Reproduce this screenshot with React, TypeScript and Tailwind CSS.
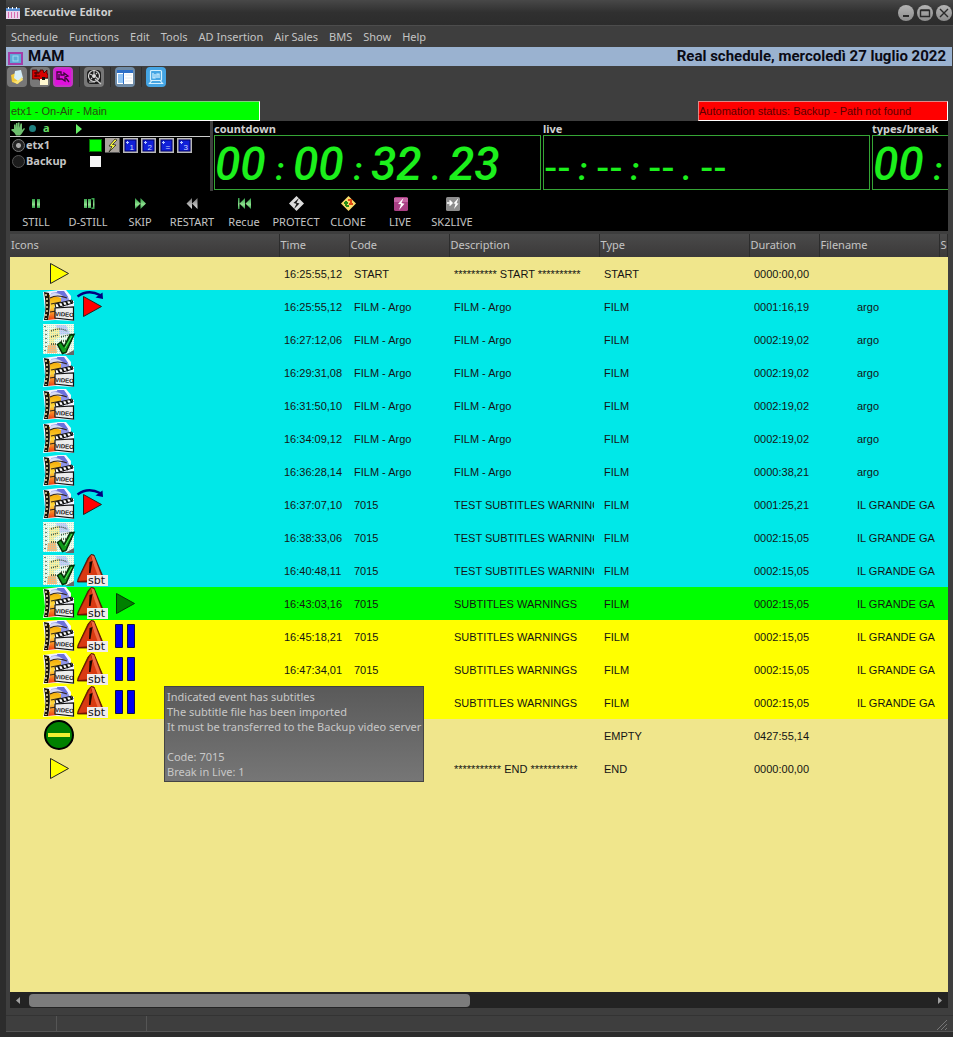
import React from "react";

type Icon = "start" | "film" | "done" | "skip" | "warn" | "play" | "pause" | "empty";

interface Row {
  tone: string;
  icons: Icon[];
  time: string;
  code: string;
  description: string;
  type: string;
  duration: string;
  file: string;
}

const KHAKI = "bg-[#f0e68c]";
const CYAN = "bg-[#00e8e8]";
const GREEN = "bg-[#00ff00]";
const YELLOW = "bg-[#ffff00]";

const row = (
  tone: string,
  icons: Icon[],
  time: string,
  code: string,
  description: string,
  type: string,
  duration: string,
  file: string,
): Row => ({ tone, icons, time, code, description, type, duration, file });

const rows: Row[] = [
  row(KHAKI, ["start"], "16:25:55,12", "START", "********** START **********", "START", "0000:00,00", ""),
  row(CYAN, ["film", "skip"], "16:25:55,12", "FILM - Argo", "FILM - Argo", "FILM", "0001:16,19", "argo"),
  row(CYAN, ["done"], "16:27:12,06", "FILM - Argo", "FILM - Argo", "FILM", "0002:19,02", "argo"),
  row(CYAN, ["film"], "16:29:31,08", "FILM - Argo", "FILM - Argo", "FILM", "0002:19,02", "argo"),
  row(CYAN, ["film"], "16:31:50,10", "FILM - Argo", "FILM - Argo", "FILM", "0002:19,02", "argo"),
  row(CYAN, ["film"], "16:34:09,12", "FILM - Argo", "FILM - Argo", "FILM", "0002:19,02", "argo"),
  row(CYAN, ["film"], "16:36:28,14", "FILM - Argo", "FILM - Argo", "FILM", "0000:38,21", "argo"),
  row(CYAN, ["film", "skip"], "16:37:07,10", "7015", "TEST SUBTITLES WARNINGS", "FILM", "0001:25,21", "IL GRANDE GA"),
  row(CYAN, ["done"], "16:38:33,06", "7015", "TEST SUBTITLES WARNINGS", "FILM", "0002:15,05", "IL GRANDE GA"),
  row(CYAN, ["done", "warn"], "16:40:48,11", "7015", "TEST SUBTITLES WARNINGS", "FILM", "0002:15,05", "IL GRANDE GA"),
  row(GREEN, ["film", "warn", "play"], "16:43:03,16", "7015", "SUBTITLES WARNINGS", "FILM", "0002:15,05", "IL GRANDE GA"),
  row(YELLOW, ["film", "warn", "pause"], "16:45:18,21", "7015", "SUBTITLES WARNINGS", "FILM", "0002:15,05", "IL GRANDE GA"),
  row(YELLOW, ["film", "warn", "pause"], "16:47:34,01", "7015", "SUBTITLES WARNINGS", "FILM", "0002:15,05", "IL GRANDE GA"),
  row(YELLOW, ["film", "warn", "pause"], "", "", "SUBTITLES WARNINGS", "FILM", "0002:15,05", "IL GRANDE GA"),
  row(KHAKI, ["empty"], "", "", "", "EMPTY", "0427:55,14", ""),
  row(KHAKI, ["start"], "", "", "*********** END ***********", "END", "0000:00,00", ""),
];

function Film() {
  return (
    <g>
      <path d="M0 2 L16 0 L23 0 L28 6 L28 10 L31 11 L31 31 L12 30 L0 31 L2 20 Z" fill="#f4f4ff" />
      <path d="M8 3 L14 2 L20 1 Q25 5 27 12 L12 14 Q9 8 8 3Z" fill="#8f95ea" />
      <path d="M14 1 L21 1 L25 7 L16 8Z" fill="#6b70dc" />
      <path d="M6 5 Q13 4 18 7 L18 14 L11 17 L14 29 L5 30 Q9 18 6 5Z" fill="url(#filmBody)" />
      <path d="M7 4 Q14 1 20 6 L18 8 Q12 5 7 8Z" fill="#d8dcf6" />
      <path d="M1 2 L6 3 Q8 16 5 30 L1 30 Q4 16 1 2Z" fill="#1a1408" />
      <path d="M3 4v2M4 8v2M4 12v2M4 16v2M4 20v2M3 24v2M3 28v1" stroke="#e8d9a0" strokeWidth="1.6" />
      <path d="M7 8 Q14 4 24 8M8 14 L18 12M7 22 L13 21" stroke="#33261a" strokeWidth="1.200" fill="none" />
      <path d="M12 14 L29 10 L30 13 L13 18Z" fill="#fff" stroke="#111" strokeWidth="1" />
      <path d="M15 13.500l2 3.500M19 12.500l2 3.500M23 11.500l2 3.500M27 10.500l2 3" stroke="#111" strokeWidth="1.800" />
      <path d="M12 18 L30.500 17 L30.500 30 L12 28Z" fill="#ededed" stroke="#111" strokeWidth="1.200" />
      <text x="12" y="26" fontSize="6" fontWeight="700" fontFamily="Liberation Sans, sans-serif" fill="#111" transform="rotate(3 13 26)">
        VIDEO
      </text>
    </g>
  );
}

function RowIcon({ kind }: { kind: Icon }) {
  return (
    <svg className="block size-[33px] shrink-0" viewBox="0 0 33 33" aria-hidden="true">
      {kind === "start" && <path d="M7.500 6.500 L25.500 16.500 L7.500 26.500Z" fill="#ffff00" stroke="#222" />}
      {kind === "film" && <Film />}
      {kind === "done" && (
        <g>
          <rect x="0" y="1" width="31" height="30" fill="#f3fbe9" />
          <path d="M13 2h10l4 9-12 1z" fill="#c9cdf6" />
          <path d="M6 7l10-2 1 9-6 3 1 5H6z" fill="#fbf0a0" />
          <path d="M5 22l8-1 1 9H4z" fill="#f7b878" />
          <rect x="0" y="1" width="31" height="30" fill="url(#hatch)" />
          <path d="M2 3v2M3 7v2M3 11v2M3 15v2M3 19v2M3 23v2M2 27v2M8 8q8-4 16 0M8 14l7-2M8 21h5M18 14l11-3M18 18h11" stroke="#33402a" strokeDasharray="1 1" strokeWidth="1.300" fill="none" />
          <path d="M22 32h9v-5z" fill="#666" />
          <path d="M14.500 21.500 L18 19 L21 23.500 L27 12 L31 11.500 L23 29.500 L19.500 30.500Z" fill="#119a1b" stroke="#042e06" strokeWidth="1.500" />
          <path d="M22 25 L29 13" stroke="#5be060" />
        </g>
      )}
      {kind === "skip" && (
        <g>
          <path d="M7.500 6.500 L25.500 16.500 L7.500 26.500Z" fill="#ff0000" stroke="#222" />
          <path d="M1.500 6.500 Q12 -1 24 5" fill="none" stroke="#000080" strokeWidth="2.500" />
          <path d="M26.500 2.500 L27 9 L19.500 7.500Z" fill="#000080" />
        </g>
      )}
      {kind === "warn" && (
        <g>
          <path d="M15 0.500 L18 1 L28 25 L14 28 L1.500 28 L2 25 L12 4Z" fill="#8e1b06" stroke="#3c0a00" strokeWidth="0.800" />
          <path d="M15 1 L18 2 L26 24 L21 25Z" fill="#f06a42" />
          <path d="M14.500 2 L23 25 L2.500 27 L3 25Z" fill="#d93a12" />
          <path d="M13.500 8 L16.500 7 L14.500 19 L13 19Z" fill="#1a0500" />
          <path d="M13 21h2v3h-2z" fill="#1a0500" />
          <rect x="11" y="21" width="21" height="11" fill="#f1ecec" />
          <text x="12" y="30" fontSize="11" fontFamily="DejaVu Sans, sans-serif" fill="#111">
            sbt
          </text>
        </g>
      )}
      {kind === "play" && <path d="M7.500 6.500 L25.500 16.500 L7.500 26.500Z" fill="#008000" stroke="#063806" />}
      {kind === "pause" && (
        <path d="M6.500 4.500h7v23h-7zM18.500 4.500h7v23h-7z" fill="#0000f0" stroke="#111148" />
      )}
      {kind === "empty" && (
        <g>
          <circle cx="16" cy="16" r="14" fill="#008000" stroke="#000" strokeWidth="2" />
          <rect x="5" y="14" width="22" height="4" fill="#f0f032" />
        </g>
      )}
    </svg>
  );
}

const toolIcons: { label: string; art: React.ReactNode; face: string; divider?: boolean }[] = [
  {
    label: "Open schedule",
    face: "bg-[#777]",
    art: (
      <g>
        <path d="M2 6 L7 4 L13 9 L9 15 L3 13Z" fill="#f3c93a" />
        <path d="M6 2 L12 1 L14 9 L9 12 L5 9Z" fill="#d5eef8" />
        <path d="M3 12 Q8 14 13 8 L14 11 L8 15Z" fill="#fbe477" />
      </g>
    ),
  },
  {
    label: "Send to air",
    face: "bg-[#777]",
    art: (
      <g>
        <path d="M0 1h5v2h3V1h3l1 3 3-3v4h1v4h-4v2h-5v-1H0Z" fill="#d60000" stroke="#380000" strokeWidth="0.800" />
        <path d="M2 4h5M2 7h6M4 3v5" stroke="#3a0000" />
        <rect x="8" y="10" width="8" height="6" fill="#fff8d0" />
        <rect x="10" y="8" width="3" height="3" fill="#111" />
      </g>
    ),
  },
  {
    label: "Edit break",
    face: "bg-[#c238c2]",
    art: (
      <g>
        <rect x="0" y="0" width="16" height="16" fill="#e010dc" />
        <path d="M2 3h4v3h3v-2l4 3-3 1v4l-3-2H2zM11 9l3 4M4 5v6" stroke="#3b0838" strokeWidth="1.300" fill="none" />
      </g>
    ),
  },
  {
    label: "Search clip",
    face: "bg-[#777]",
    divider: true,
    art: (
      <g>
        <rect x="1" y="1" width="14" height="14" rx="4" fill="#1c1c1c" />
        <circle cx="8" cy="7" r="5.500" fill="none" stroke="#ddd" strokeWidth="1.200" />
        <circle cx="8" cy="7" r="2" fill="#ddd" />
        <path d="M8 2v3M4 5l2 1M10 8l2 2M9 10l6 5M3 13h6M5 10l1-1M11 4l-1 1" stroke="#ccc" strokeWidth="1.200" />
      </g>
    ),
  },
  {
    label: "Layout",
    face: "bg-[#6f8ba6]",
    divider: true,
    art: (
      <g>
        <rect x="0" y="1" width="16" height="14" fill="#fff" />
        <rect x="0" y="1" width="16" height="3" fill="#2d6fc7" />
        <rect x="1" y="5" width="5" height="9" fill="#8fc4f4" />
        <path d="M8 6h7M8 9h7M8 12h7" stroke="#dfe9f1" />
        <path d="M6.500 4v11" stroke="#2d6fc7" />
      </g>
    ),
  },
  {
    label: "Monitor",
    face: "bg-[#45a5e4]",
    divider: true,
    art: (
      <g fill="none" stroke="#d3f0ff" strokeWidth="1.200">
        <rect x="2.500" y="1.500" width="11" height="10" rx="1" />
        <path d="M3.500 12L1.500 14.500h13L12.500 12M5 4v5h2V5M9 9V5h2v4" />
      </g>
    ),
  },
];

const transport: { label: string; art: React.ReactNode }[] = [
  { label: "STILL", art: <path d="M4 4h3v9H4zM9 4h3v9H9z" fill="url(#greenFade)" /> },
  { label: "D-STILL", art: <path d="M4 4h3v9H4zM8 4h3v9H8zM11.500 3h3v11h-3v-1.500h1.500v-8h-1.500z" fill="url(#greenFade)" /> },
  { label: "SKIP", art: <path d="M3 3l5.500 5.500L3 14zM8.500 3l5.500 5.500L8.500 14z" fill="url(#greenFade)" /> },
  { label: "RESTART", art: <path d="M8 3L2.500 8.500 8 14zM13.500 3L8 8.500l5.500 5.500z" fill="url(#greyFade)" /> },
  { label: "Recue", art: <path d="M2 3h1.500v11H2zM9 3L3.500 8.500 9 14zM15 3L9.500 8.500 15 14z" fill="url(#greenFade)" /> },
  {
    label: "PROTECT",
    art: (
      <g>
        <path d="M8.500 1L16 8.500 8.500 16 1 8.500z" fill="#dcdcdc" />
        <path d="M11 3L5.500 8l3 .8L6 14l5.500-5.500-3-.8z" fill="#151515" />
      </g>
    ),
  },
  {
    label: "CLONE",
    art: (
      <g>
        <path d="M8.500 1L16 8.500 8.500 16 1 8.500z" fill="#f6dc6a" />
        <path d="M4 8h4M6 6v5M6 11h3" stroke="#278b16" strokeWidth="2" fill="none" />
        <path d="M8 5h4M11 5v5M9 9h4" stroke="#e04a14" strokeWidth="2" fill="none" />
      </g>
    ),
  },
  {
    label: "LIVE",
    art: (
      <g>
        <rect x="2" y="2" width="14" height="14" rx="1.500" fill="#a93f84" />
        <path d="M2 3h14v4H2z" fill="#c765a4" />
        <path d="M11.500 3L6 9l3 .3L7 15l5.500-6.300L9.500 8z" fill="#fff" />
      </g>
    ),
  },
  {
    label: "SK2LIVE",
    art: (
      <g>
        <rect x="2" y="2" width="14" height="14" rx="1.500" fill="#8d8d8d" />
        <path d="M3 8h5M5.500 5.500L8 8l-2.500 2.500" stroke="#fff" strokeWidth="1.500" fill="none" />
        <path d="M14.500 3L9.500 8.500l2 .3L10 14l4.500-5.500-2-.3z" fill="#fff" />
      </g>
    ),
  },
];

function Clock({ label, parts, size }: { label: string; parts: string[]; size: string }) {
  return (
    <div className={`flex min-w-0 flex-col overflow-hidden ${size}`}>
      <h2 className="h-[14px] text-[11px] leading-[15px] font-bold text-[#d0d0d0]">{label}</h2>
      <div className="flex h-[55px] items-baseline overflow-hidden border border-[#35a535] leading-[53px] whitespace-nowrap text-[#1cf01c]">
        <span className="w-0 overflow-hidden text-[46px]" aria-hidden="true">
          &nbsp;
        </span>
        {parts.map((part, i) =>
          part === "--" ? (
            <span key={i} className="w-[26px] shrink-0 font-['Liberation_Sans',sans-serif] text-[40px]">
              --
            </span>
          ) : part.length === 2 ? (
            <span key={i} className="w-[52px] shrink-0 font-[Roboto,sans-serif] text-[46px] font-medium italic">
              {part}
            </span>
          ) : (
            <span key={i} className="w-[26px] shrink-0 text-center font-[Roboto,sans-serif] text-[32px] font-bold italic">
              {part}
            </span>
          ),
        )}
      </div>
    </div>
  );
}

const columns = [
  { label: "Icons", width: "w-[269px]" },
  { label: "Time", width: "w-[70px]" },
  { label: "Code", width: "w-[100px]" },
  { label: "Description", width: "w-[150px]" },
  { label: "Type", width: "w-[150px]" },
  { label: "Duration", width: "w-[70px]" },
  { label: "Filename", width: "w-[120px]" },
  { label: "Sc", width: "" },
];

const menus = ["Schedule", "Functions", "Edit", "Tools", "AD Insertion", "Air Sales", "BMS", "Show", "Help"];

export default function App() {
  return (
    <div className="flex min-h-screen flex-col border-l-[6px] border-[#2c2c2c] bg-[#3e3e3e] font-['Noto_Sans','Liberation_Sans',sans-serif] text-[11px] text-[#c4c4c4]">
      <svg className="absolute size-0" aria-hidden="true">
        <defs>
          <linearGradient id="filmBody" x1="0" y1="0" x2="0" y2="1">
            <stop offset="0" stopColor="#f2a400" />
            <stop offset="0.5" stopColor="#ffd83a" />
            <stop offset="1" stopColor="#f03a10" />
          </linearGradient>
          <linearGradient id="greenFade" x1="0" y1="0" x2="0" y2="1">
            <stop offset="0" stopColor="#2f9e45" />
            <stop offset="0.6" stopColor="#8fe08f" />
            <stop offset="1" stopColor="#2f9e45" />
          </linearGradient>
          <linearGradient id="greyFade" x1="0" y1="0" x2="0" y2="1">
            <stop offset="0" stopColor="#777" />
            <stop offset="1" stopColor="#ddd" />
          </linearGradient>
          <pattern id="hatch" width="2" height="2" patternUnits="userSpaceOnUse">
            <rect width="1" height="1" fill="#7fdcd4" fillOpacity="0.600" />
          </pattern>
        </defs>
      </svg>

      <header className="flex h-[26px] items-center border-b border-[#4c4c4c] bg-linear-to-b from-[#484848] via-[#303030] to-[#2c2c2c] pr-px">
        <svg className="h-3 w-[14px]" viewBox="0 0 14 12" aria-hidden="true">
          <rect y="1" width="14" height="11" fill="#e9d3ee" />
          <rect y="1" width="14" height="3" fill="#5a8fd0" />
          <path d="M2.500 5v6M5.500 5v6M8.500 5v6M11.500 5v6" stroke="#d86bb0" />
          <path d="M2.500 0v2M6.500 0v2M10.500 0v2" stroke="#fff" />
        </svg>
        <h1 className="flex-1 pl-1 font-bold text-[#cfcfcf]">Executive Editor</h1>
        <div className="flex gap-[3px]">
          {["Minimize", "Maximize", "Close"].map((name) => (
            <button key={name} aria-label={name} className="size-4 rounded-full bg-linear-to-b from-[#b4b4b4] to-[#8c8c8c]">
              <svg viewBox="0 0 16 16" fill="none" stroke="#2a2a2a" strokeWidth="1.400" aria-hidden="true">
                {name === "Minimize" && <path d="M5 11h6" strokeWidth="2" />}
                {name === "Maximize" && <path d="M3.500 5.500h9v6h-9zM3.500 5h9" />}
                {name === "Close" && <path d="M4 4l8 8M12 4l-8 8" />}
              </svg>
            </button>
          ))}
        </div>
      </header>

      <nav className="flex h-[21px] items-center gap-[11px] pt-px pl-[5px]">
        {menus.map((m) => (
          <button key={m}>{m}</button>
        ))}
      </nav>

      <div className="mr-px flex h-[19px] items-center bg-[#9ab2d0] pr-[6px] font-[Roboto,sans-serif] text-[15px] font-bold text-[#0a0a14]">
        <svg className="mt-1 mr-[5px] ml-[2px] h-[13px] w-[15px]" viewBox="0 0 15 13" aria-hidden="true">
          <rect x="1" y="1" width="13" height="11" fill="#5fa9d8" stroke="#a33fa8" strokeWidth="2" />
          <rect x="5" y="4" width="5" height="5" fill="none" stroke="#9bdcf0" />
        </svg>
        <span className="flex-1">MAM</span>
        <span>Real schedule, mercoledì 27 luglio 2022</span>
      </div>

      <div className="flex h-[35px] items-start pt-px pl-px">
        {toolIcons.map((t) => (
          <React.Fragment key={t.label}>
            {t.divider && <span className="mr-1 ml-[3px] h-5 w-px bg-[#2e2e2e]" />}
            <button aria-label={t.label} className={`mr-[3px] size-5 rounded p-[2px] ${t.face}`}>
              <svg viewBox="0 0 16 16" aria-hidden="true">
                {t.art}
              </svg>
            </button>
          </React.Fragment>
        ))}
      </div>

      <main className="mr-[5px] ml-1 flex flex-1 flex-col">
        <div className="flex justify-between font-['Liberation_Sans',sans-serif] leading-[18px]">
          <p className="h-5 w-[250px] border border-t-[#7fd07f] border-r-white border-b-white border-l-[#00ff00] bg-[#00ff00] text-[#2b4a10]">
            etx1 - On-Air - Main
          </p>
          <p className="h-5 w-[250px] border border-t-[#d88] border-r-white border-b-white border-l-[#d88] bg-[#ff0000] text-[#5a0000]">
            Automation status: Backup - Path not found
          </p>
        </div>

        <section className="flex h-[110px] flex-col bg-black">
          <div className="flex h-[70px] overflow-hidden">
            <div className="w-[200px] shrink-0">
              <div className="flex h-4 items-center border-b border-[#ccc] pl-px">
                <svg className="h-[14px] w-[14px]" viewBox="0 0 14 14" fill="#6fbf6f" aria-hidden="true">
                  <path d="M3 7V2.500h1.500V6L5 1h1.500v5L7 .5h1.500V6L9.500 1.500H11V8l2-2 1 .8L10.500 12 9 13.500H5L3.500 11 0 8l1-1z" />
                </svg>
                <svg className="ml-1 size-[7px]" viewBox="0 0 7 7" aria-hidden="true">
                  <circle cx="3.500" cy="3.500" r="3.500" fill="#1f8080" />
                </svg>
                <span className="w-10 pl-[7px] font-bold text-[#66dd66]">a</span>
                <svg className="h-[10px] w-[6px]" viewBox="0 0 6 10" aria-hidden="true">
                  <path d="M0 0l6 5-6 5z" fill="#66ee66" />
                </svg>
              </div>
              <div className="flex h-[17px] items-center pl-[2px]">
                <input id="srv-main" name="server" type="radio" defaultChecked className="size-[13px] appearance-none rounded-full border border-[#777] bg-[#222] checked:bg-[radial-gradient(circle,#aaa_2px,#222_3px)]" />
                <label htmlFor="srv-main" className="w-16 pl-px font-bold">etx1</label>
                <span className="size-[13px] border border-[#007a00] bg-[#00ff00]" />
                <svg className="ml-[3px] size-[15px] bg-[#aaa39c]" viewBox="0 0 15 15" aria-hidden="true">
                  <path d="M14.500 0v14.500H0" stroke="#555" fill="none" />
                  <path d="M10 1L4 8l3 .5L4 14l7-7-3.500-.5L12 2z" fill="#ffff40" stroke="#222" strokeWidth="0.800" />
                </svg>
                {["1", "2", "=", "3"].map((n) => (
                  <svg key={n} className="ml-[3px] size-[15px] bg-[#b8b8b8]" viewBox="0 0 15 15" aria-hidden="true">
                    <rect x="2" y="2" width="11" height="11" fill="#1020d8" stroke="#000068" />
                    <path d="M3 4.500h3M4.500 3v3" stroke="#b4c6ff" />
                    <text x="6.500" y="12" fontSize="8" fontFamily="Liberation Sans, sans-serif" fill="#cfd8ff">
                      {n}
                    </text>
                  </svg>
                ))}
              </div>
              <div className="flex h-[14px] items-center pl-[2px]">
                <input id="srv-backup" name="server" type="radio" className="size-[13px] appearance-none rounded-full border border-[#555] bg-[#1c1c1c]" />
                <label htmlFor="srv-backup" className="w-[65px] pl-px font-bold">Backup</label>
                <span className="size-[11px] bg-[#f4f4f4]" />
              </div>
            </div>
            <div className="w-[3px] shrink-0 bg-[#3e3e3e]" />
            <div className="flex min-w-0 flex-1 gap-[2px] pl-px">
              <Clock label="countdown" size="w-[327px] shrink-0" parts={["00", ":", "00", ":", "32", ".", "23"]} />
              <Clock label="live" size="w-[327px] shrink-0" parts={["--", ":", "--", ":", "--", ".", "--"]} />
              <Clock label="types/break" size="flex-1 [&>div]:border-r-0" parts={["00", ":"]} />
            </div>
          </div>
          <div className="flex h-10 pt-1">
            {transport.map((t) => (
              <button key={t.label} className="flex w-[52px] flex-col items-center">
                <svg className="size-[17px] shrink-0" viewBox="0 0 17 17" aria-hidden="true">
                  {t.art}
                </svg>
                <span className="leading-[19px]">{t.label}</span>
              </button>
            ))}
          </div>
        </section>

        <div className="relative mt-[3px] flex-1 bg-[#f0e68c]">
          <table className="w-full table-fixed border-collapse font-['Liberation_Sans',sans-serif] text-[#141414]">
            <thead>
              <tr className="h-[23px] bg-linear-to-b from-[#4a4a4a] to-[#3b3939] font-['Noto_Sans',sans-serif] text-[#c4c4c4]">
                {columns.map((c) => (
                  <th key={c.label} className={`overflow-hidden border-r border-[#2c2c2c] p-0 pl-px text-left font-normal ${c.width}`}>
                    {c.label}
                  </th>
                ))}
              </tr>
            </thead>
            <tbody>
              {rows.map((r, i) => (
                <tr key={i} className={`h-[33px] whitespace-nowrap ${r.tone}`}>
                  <td className="p-0 pl-[33px]">
                    <div className="flex">
                      {r.icons.map((k) => (
                        <RowIcon key={k} kind={k} />
                      ))}
                    </div>
                  </td>
                  {[r.time, r.code, r.description, r.type, r.duration].map((v, j) => (
                    <td key={j} className="px-[5px] pt-[2px] pb-0">
                      <div className="overflow-hidden">{v}</div>
                    </td>
                  ))}
                  <td className="overflow-hidden pt-[2px] pr-0 pb-0 pl-[38px]">{r.file}</td>
                  <td className="p-0" />
                </tr>
              ))}
            </tbody>
          </table>
          <div
            role="tooltip"
            className="absolute top-[452px] left-[154px] h-24 border border-[#444] bg-linear-to-b from-[#5a5a5a] to-[#767676] px-[2px] pt-[2px] leading-[15px] whitespace-pre text-[#c8c8c8]"
          >
            {"Indicated event has subtitles\nThe subtitle file has been imported\nIt must be transferred to the Backup video server\n\nCode: 7015\nBreak in Live: 1"}
          </div>
        </div>

        <div className="flex h-4 items-center justify-between bg-[#232323] px-[6px]">
          <svg className="h-[7px] w-1" viewBox="0 0 4 7" aria-hidden="true">
            <path d="M4 0v7L0 3.500z" fill="#a0a0a0" />
          </svg>
          <div className="mx-[9px] flex-1">
            <div className="h-[13px] w-[49%] rounded bg-[#7c7c7c]" />
          </div>
          <svg className="h-[7px] w-1" viewBox="0 0 4 7" aria-hidden="true">
            <path d="M0 0v7l4-3.500z" fill="#a0a0a0" />
          </svg>
        </div>
      </main>

      <footer className="mt-[7px] flex h-[17px] items-stretch border-y border-t-[#333] border-b-[#555]">
        <span className="w-[51px] border-r border-[#555]" />
        <span className="ml-[2px] w-[88px] border-r border-[#555]" />
        <span className="flex-1" />
        <svg className="mr-[5px] size-3 self-end" viewBox="0 0 12 12" stroke="#777" aria-hidden="true">
          <path d="M1 11L11 1M5 11l6-6M9 11l2-2" />
        </svg>
      </footer>
      <div className="h-[5px] bg-[#2c2c2c]" />
    </div>
  );
}
